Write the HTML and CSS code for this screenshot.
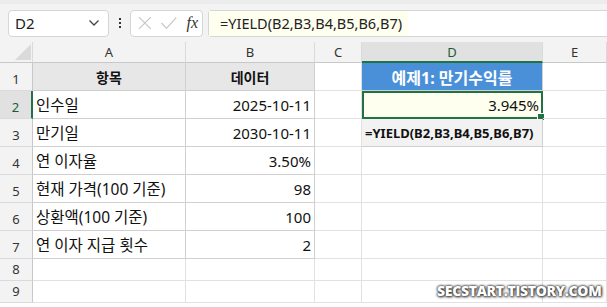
FILE: index.html
```html
<!DOCTYPE html>
<html lang="ko">
<head>
  <meta charset="UTF-8" />
  <title>YIELD 함수 예제</title>
  <link rel="stylesheet" href="styles.css">
</head>
<body>
  <div class="formula-bar">
    <div class="name-box">
      <span>D2</span>
      <svg class="chevron" width="12" height="8" viewBox="0 0 12 8"><path d="M1.5 1.5 L6 6 L10.5 1.5" fill="none" stroke="#444" stroke-width="1.3"/></svg>
    </div>
    <div class="dots"><i></i><i></i><i></i></div>
    <div class="fx-box">
      <svg width="16" height="16" viewBox="0 0 16 16"><path d="M2 2 L14 14 M14 2 L2 14" stroke="#c8c8c8" stroke-width="1.3" fill="none"/></svg>
      <svg width="18" height="16" viewBox="0 0 18 16"><path d="M1.5 8 L6.5 13.5 L16.5 2.5" stroke="#c8c8c8" stroke-width="1.3" fill="none"/></svg>
      <span class="fx">fx</span>
    </div>
    <div class="formula-input"><span>=YIELD(B2,B3,B4,B5,B6,B7)</span></div>
  </div>

  <div class="sheet">
    <div class="corner"><span class="tri"></span></div>
    <div class="col-hdr">A</div>
    <div class="col-hdr">B</div>
    <div class="col-hdr">C</div>
    <div class="col-hdr active">D</div>
    <div class="col-hdr">E</div>

    <div class="row-hdr">1</div>
    <div class="cell th">항목</div>
    <div class="cell th">데이터</div>
    <div class="cell"></div>
    <div class="cell title">예제1: 만기수익률</div>
    <div class="cell"></div>

    <div class="row-hdr active">2</div>
    <div class="cell td ko">인수일</div>
    <div class="cell td num">2025-10-11</div>
    <div class="cell"></div>
    <div class="cell result">3.945%<span class="handle"></span></div>
    <div class="cell"></div>

    <div class="row-hdr">3</div>
    <div class="cell td ko">만기일</div>
    <div class="cell td num">2030-10-11</div>
    <div class="cell"></div>
    <div class="cell formula">=YIELD(B2,B3,B4,B5,B6,B7)</div>
    <div class="cell"></div>

    <div class="row-hdr">4</div>
    <div class="cell td ko">연 이자율</div>
    <div class="cell td num">3.50%</div>
    <div class="cell"></div>
    <div class="cell"></div>
    <div class="cell"></div>

    <div class="row-hdr">5</div>
    <div class="cell td ko">현재 가격(100 기준)</div>
    <div class="cell td num">98</div>
    <div class="cell"></div>
    <div class="cell"></div>
    <div class="cell"></div>

    <div class="row-hdr">6</div>
    <div class="cell td ko">상환액(100 기준)</div>
    <div class="cell td num">100</div>
    <div class="cell"></div>
    <div class="cell"></div>
    <div class="cell"></div>

    <div class="row-hdr">7</div>
    <div class="cell td ko">연 이자 지급 횟수</div>
    <div class="cell td num">2</div>
    <div class="cell"></div>
    <div class="cell"></div>
    <div class="cell"></div>

    <div class="row-hdr">8</div>
    <div class="cell"></div><div class="cell"></div><div class="cell"></div><div class="cell"></div><div class="cell"></div>

    <div class="row-hdr">9</div>
    <div class="cell"></div><div class="cell"></div><div class="cell"></div><div class="cell"></div><div class="cell"></div>
  </div>

  <div class="watermark">SECSTART.TISTORY.COM</div>
</body>
</html>
```

FILE: styles.css
```css
body {
  margin: 0;
  width: 607px;
  height: 307px;
  overflow: hidden;
  background: #fff;
  font-family: 'Noto Sans', 'Noto Sans CJK KR', sans-serif;
  position: relative;
}

.formula-bar {
  display: flex;
  align-items: center;
  height: 42px;
  padding: 0 0 0 8px;
  box-sizing: border-box;
  background: #f3f3f3;
  border-top: 4px solid #ececec;
}

.name-box {
  width: 101px;
  height: 27px;
  box-sizing: border-box;
  background: #fff;
  border: 1px solid #d6d6d6;
  border-radius: 4px;
  display: flex;
  align-items: center;
  justify-content: space-between;
  padding: 0 8px 0 6px;
  font-size: 15px;
  color: #222;
}

.dots {
  width: 21px;
  display: flex;
  flex-direction: column;
  align-items: center;
  gap: 2px;
}

.dots i {
  width: 2px;
  height: 2px;
  background: #333;
}

.fx-box {
  width: 73px;
  height: 27px;
  box-sizing: border-box;
  background: #fff;
  border: 1px solid #d6d6d6;
  border-radius: 4px;
  display: flex;
  align-items: center;
  gap: 7px;
  padding: 0 4px 0 6px;
}

.fx {
  font-family: 'Liberation Serif', serif;
  font-style: italic;
  font-size: 16px;
  color: #333;
  margin-left: 2px;
}

.formula-input {
  flex: 1;
  height: 27px;
  margin-left: 5px;
  box-sizing: border-box;
  background: #fff;
  border: 1px solid #d6d6d6;
  border-right: none;
  border-radius: 4px 0 0 4px;
  display: flex;
  align-items: stretch;
}

.formula-input span {
  background: #fffff0;
  padding: 0 6px 0 11px;
  display: flex;
  align-items: center;
  font-size: 14.5px;
  color: #222;
}

.sheet {
  display: grid;
  grid-template-columns: 33px 153px 129px 47px 181px 64px;
  grid-template-rows: 21px repeat(7, 28px) 22px 22px;
}

.corner {
  background: #f3f3f3;
  border-right: 1px solid #dadada;
  border-bottom: 1px solid #c8c8c8;
  position: relative;
}

.tri {
  position: absolute;
  right: 1px;
  bottom: 2px;
  width: 0;
  height: 0;
  border-left: 16px solid transparent;
  border-bottom: 16px solid #dadada;
}

.col-hdr {
  background: #f3f3f3;
  border-right: 1px solid #dadada;
  border-bottom: 1px solid #c8c8c8;
  font-size: 13px;
  color: #333;
  display: flex;
  align-items: center;
  justify-content: center;
}

.col-hdr.active {
  background: #e1e1e1;
  color: #185c37;
  border-bottom: 2px solid #217346;
}

.row-hdr {
  background: #f3f3f3;
  border-right: 1px solid #c8c8c8;
  border-bottom: 1px solid #dadada;
  font-size: 13px;
  color: #333;
  display: flex;
  align-items: flex-end;
  justify-content: center;
  padding-bottom: 2px;
  box-sizing: border-box;
}

.row-hdr.active {
  background: #e1e1e1;
  color: #185c37;
  border-right: 2px solid #217346;
}

.cell {
  border-right: 1px solid #e1e1e1;
  border-bottom: 1px solid #e1e1e1;
  font-size: 15px;
  color: #111;
  display: flex;
  align-items: center;
  padding: 0 3px;
  box-sizing: border-box;
  white-space: nowrap;
  position: relative;
}

.th,
.td {
  border-right-color: #d0d0d0;
  border-bottom-color: #d0d0d0;
}

.ko {
  font-size: 15.5px;
}

.th {
  background: #e7e7e7;
  font-weight: 700;
  font-size: 14px;
  justify-content: center;
}

.num {
  justify-content: flex-end;
}

.title {
  background: #4a90d9;
  color: #fff;
  font-weight: 700;
  font-size: 16px;
  justify-content: center;
  border-color: #d0d0d0;
}

.result {
  background: #fffff0;
  justify-content: flex-end;
  border: 2px solid #217346;
  padding-right: 2px;
}

.handle {
  position: absolute;
  right: -4px;
  bottom: -4px;
  width: 6px;
  height: 6px;
  background: #217346;
  border: 1px solid #fff;
}

.formula {
  background: #f2f2f2;
  font-weight: 700;
  font-size: 13px;
  border-color: #d0d0d0;
}

.watermark {
  position: absolute;
  left: 437px;
  top: 281px;
  font-family: 'Open Sans', sans-serif;
  font-weight: 800;
  font-size: 14px;
  letter-spacing: -0.3px;
  color: #fff;
  text-shadow: 0 0 2px #222, 0 0 3px #333, 1px 1px 3px #555;
}
```
